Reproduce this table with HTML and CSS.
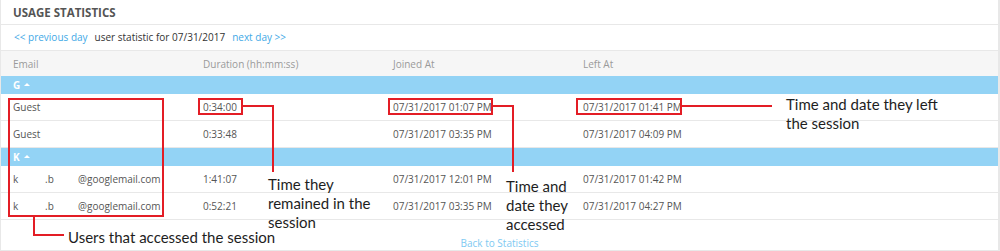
FILE: index.html
```html
<!DOCTYPE html>
<html>
<head>
<meta charset="utf-8">
<link rel="stylesheet" href="styles.css">
</head>
<body>
<div class="panel">
  <div class="panel-title">USAGE STATISTICS</div>
  <div class="daynav">
    <a class="link">&lt;&lt; previous day</a>
    <span class="day">user statistic for 07/31/2017</span>
    <a class="link">next day &gt;&gt;</a>
  </div>
  <div class="grid">
    <div class="row head">
      <div class="cell">Email</div>
      <div class="cell">Duration (hh:mm:ss)</div>
      <div class="cell">Joined At</div>
      <div class="cell">Left At</div>
    </div>
    <div class="group">G <span class="caret"></span></div>
    <div class="row">
      <div class="cell">Guest</div>
      <div class="cell">0:34:00</div>
      <div class="cell">07/31/2017 01:07 PM</div>
      <div class="cell">07/31/2017 01:41 PM</div>
    </div>
    <div class="row">
      <div class="cell">Guest</div>
      <div class="cell">0:33:48</div>
      <div class="cell">07/31/2017 03:35 PM</div>
      <div class="cell">07/31/2017 04:09 PM</div>
    </div>
    <div class="group">K <span class="caret"></span></div>
    <div class="row">
      <div class="cell"><span class="n1">k</span><span class="n2">.b</span><span>@googlemail.com</span></div>
      <div class="cell">1:41:07</div>
      <div class="cell">07/31/2017 12:01 PM</div>
      <div class="cell">07/31/2017 01:42 PM</div>
    </div>
    <div class="row">
      <div class="cell"><span class="n1">k</span><span class="n2">.b</span><span>@googlemail.com</span></div>
      <div class="cell">0:52:21</div>
      <div class="cell">07/31/2017 03:35 PM</div>
      <div class="cell">07/31/2017 04:27 PM</div>
    </div>
  </div>
  <div class="footer"><a class="back">Back to Statistics</a></div>

  <svg class="marks" width="1000" height="251" viewBox="0 0 1000 251">
    <g fill="none" stroke="#e31d25" stroke-width="2">
      <rect x="9" y="99" width="154" height="117"/>
      <rect x="199" y="99" width="43" height="15"/>
      <rect x="389" y="99" width="103" height="15"/>
      <rect x="577" y="99" width="104" height="15"/>
      <polyline points="34,216 34,235 64,235"/>
      <polyline points="243,106 273,106 273,172"/>
      <polyline points="493,106 513,106 513,172"/>
      <polyline points="682,106 772,106"/>
    </g>
  </svg>
  <div class="note note-users">Users that accessed the session</div>
  <div class="note note-dur">Time they<br>remained in the<br>session</div>
  <div class="note note-join">Time and<br>date they<br>accessed</div>
  <div class="note note-left">Time and date they left<br>the session</div>
</div>
</body>
</html>
```

FILE: styles.css
```css
html, body {
  margin: 0;
  padding: 0;
  background: #ffffff;
}
body {
  font-family: "Open Sans", "Liberation Sans", sans-serif;
  font-size: 10px;
  color: #555555;
}
.panel {
  position: relative;
  box-sizing: border-box;
  width: 1000px;
  height: 251px;
  border-left: 1px solid #e8e8e8;
  border-right: 2px solid #e8e8e8;
  border-bottom: 1px solid #e8e8e8;
}
.panel-title {
  box-sizing: border-box;
  height: 25px;
  padding: 5px 0 0 12px;
  font-size: 11.5px;
  font-weight: 700;
  color: #555555;
  border-bottom: 1px solid #e8e8e8;
}
.daynav {
  box-sizing: border-box;
  height: 26px;
  display: flex;
  align-items: center;
  gap: 7px;
  padding: 0 0 1px 13px;
  border-bottom: 1px solid #e8e8e8;
  color: #333333;
}
.link {
  color: #3fa9e6;
}
.grid {
  display: flex;
  flex-direction: column;
}
.row {
  box-sizing: border-box;
  display: grid;
  grid-template-columns: 190px 190px 190px 1fr;
  height: 27px;
  align-items: center;
  border-bottom: 1px solid #e8e8e8;
}
.row .cell {
  padding-left: 12px;
  white-space: nowrap;
}
.row.head {
  height: 25px;
  background: #f6f6f6;
  color: #9a9a9a;
  border-bottom: none;
}
.group {
  box-sizing: border-box;
  height: 18px;
  display: flex;
  align-items: center;
  gap: 4px;
  padding-left: 12px;
  background: #93d3f5;
  color: #ffffff;
  font-weight: 700;
}
.caret {
  width: 0;
  height: 0;
  border-left: 3px solid transparent;
  border-right: 3px solid transparent;
  border-bottom: 3px solid #ffffff;
  margin-bottom: 1px;
}
.n1 {
  display: inline-block;
  width: 32px;
}
.n2 {
  display: inline-block;
  width: 33px;
}
.footer {
  display: flex;
  justify-content: center;
  padding-top: 16px;
}
.back {
  color: #7ec9f2;
}
.marks {
  position: absolute;
  left: -1px;
  top: 0;
  pointer-events: none;
}
.note {
  position: absolute;
  font-family: "Lato", "Open Sans", sans-serif;
  font-size: 15px;
  line-height: 19px;
  color: #1e1e1e;
  white-space: nowrap;
}
.note-users { left: 67px; top: 228px; }
.note-dur { left: 267px; top: 175px; }
.note-join { left: 505px; top: 177px; }
.note-left { left: 785px; top: 95px; }
```
